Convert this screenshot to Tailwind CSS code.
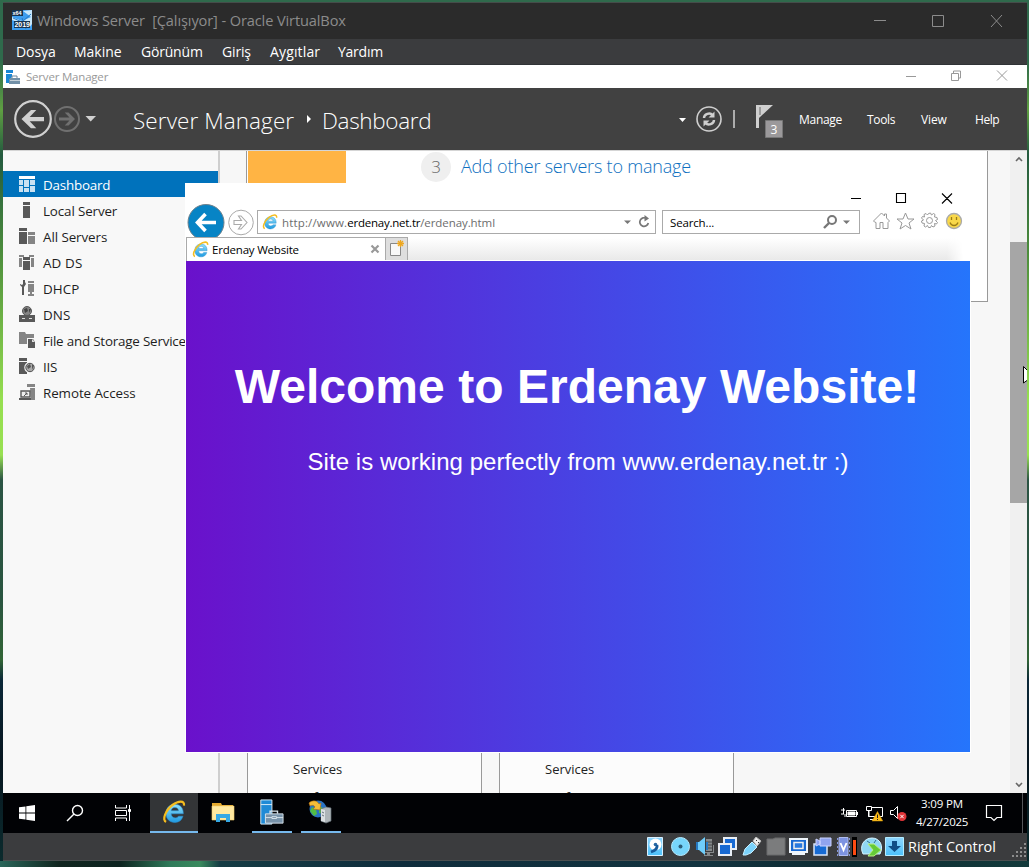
<!DOCTYPE html>
<html lang="tr">
<head>
<meta charset="utf-8">
<title>Windows Server - Oracle VirtualBox</title>
<script src="https://cdn.jsdelivr.net/npm/@tailwindcss/browser@4"></script>
</head>
<body class="h-[867px] w-[1029px] overflow-hidden whitespace-nowrap font-['Open_Sans',sans-serif]">
<!-- shared symbols -->
<svg class="absolute h-0 w-0">
  <linearGradient id="ieb" x1="0" y1="0" x2="0" y2="1"><stop offset="0" stop-color="#8fe0fb"/><stop offset="1" stop-color="#1f9ae0"/></linearGradient>
  <linearGradient id="sky" x1="0" y1="0" x2="0" y2="1"><stop offset="0" stop-color="#8fd6ff"/><stop offset="1" stop-color="#4cc0fa"/></linearGradient>
  <symbol id="ie" viewBox="0 0 24 24">
    <path d="M21.300 13.800H9.200C9.400 16.600 10.900 17.900 13.200 17.900c1.600 0 2.600-.6 3.300-1.700h4.400C19.900 20 17 22.400 12.900 22.400 7.500 22.400 4 18.800 4 13.400 4 8 7.500 4.300 12.900 4.300c5.400 0 8.600 3.800 8.400 9.500zM9.200 10.700h7.300c-.2-2.100-1.500-3.200-3.600-3.200-2.100 0-3.400 1.200-3.700 3.200z" fill="url(#ieb)" stroke="#2b8fd0" stroke-width=".6"/>
    <path d="M4.200 21.800C-.4 20.500 3.500 10.300 10.500 5 16.200.8 22.800-.2 22 5.600" fill="none" stroke="#f5bd1f" stroke-width="2.200"/>
  </symbol>
  <symbol id="toolbox" viewBox="0 0 28 28">
    <path d="M3 1h12v26H3z" fill="#1f8ad6" stroke="#dff0fb"/><path d="M3 6h12" stroke="#dff0fb"/>
    <path d="M13 16v-3h8v3" fill="none" stroke="#d9e4ec" stroke-width="1.500"/>
    <path d="M8 16h19v10H8z" fill="#7893aa" stroke="#d9e4ec"/><path d="M8 20h7m5 0h7M15 19h5v2h-5z" stroke="#d9e4ec" fill="none"/>
  </symbol>
</svg>

<div class="flex h-full flex-col bg-[linear-gradient(to_bottom,#2f6a4c_0px,#2f6a4c_60px,#5f9f42_110px,#245a3f_155px,#4b8c3c_250px,#96df50_400px,#98e052_455px,#2b5444_480px,#2a5540_600px,#326536_660px,#0b2838_680px,#071620_760px,#0b2c2e_867px)] pl-[3px] pr-[2px] pt-[2px]">
  <!-- VirtualBox title -->
  <header class="flex h-[37px] shrink-0 items-center border-t border-[#454d4a] bg-[#2b2b2b] pl-[9px] text-[#8c8c8c]">
    <svg class="-mt-[3px] h-5 w-5 shrink-0" viewBox="0 0 20 20"><path fill="#3c9df0" d="M0 0h20v20H0z"/><path fill="#c7e7fb" d="m11 1 8 6-9 4L0 7v3l8 3 6-1 3 6 3-4V0z"/><path stroke="#2679c5" d="m1 8 9 4 9-8M10 8l4 11" fill="none"/><path fill="#173450" d="M0 0h11v6H0zM2 11h16v7H2z"/><text x=".5" y="5.300" font-family="Liberation Sans" font-size="5.500" font-weight="700" fill="#fff">x64</text><text x="2.400" y="17" font-family="Liberation Sans" font-size="7" font-weight="700" fill="#fff">2019</text></svg>
    <h1 class="-mt-[2px] ml-[5px] whitespace-pre text-[14.600px] leading-5 tracking-[-0.120px]">Windows Server  [Çalışıyor] - Oracle VirtualBox</h1>
    <svg class="-mt-px ml-auto mr-[23px] h-5 w-[131px]" viewBox="0 0 131 20" fill="none" stroke="#8c8c8c"><path d="M1 9.500h12M59.500 4.500h11v11h-11zM118 4l11 12M129 4l-11 12"/></svg>
  </header>
  <nav class="flex h-[26px] shrink-0 items-center border-b border-[#303336] bg-[#3b3c3e] pl-[13px] text-[14px] text-white">
    <span class="w-[58px] tracking-[-0.050px]">Dosya</span><span class="w-[67px] tracking-[-0.020px]">Makine</span><span class="w-[81px] tracking-[-0.200px]">Görünüm</span><span class="w-[48px] tracking-[-0.150px]">Giriş</span><span class="w-[68px] tracking-[0.150px]">Aygıtlar</span><span class="tracking-[-0.250px]">Yardım</span>
  </nav>

  <!-- Guest display -->
  <main class="relative flex h-[768px] shrink-0 flex-col overflow-hidden bg-[#f7f7f7] text-[#1e1e1e]">
    <div class="flex h-[23px] shrink-0 items-center bg-white pl-[2px] text-[11.500px] text-[#999]">
      <svg class="h-4 w-4" viewBox="0 0 16 16"><path fill="#1c87d5" d="M1 1h7v3H1zM1 5h6v3L4 11v3H1z"/><path d="M7 9V7h5v2" fill="none" stroke="#6c879d"/><path fill="#7290a7" d="M5 9h10v6H4v-4z"/><path stroke="#c4d0d8" d="M5 11.500h10"/></svg>
      <span class="ml-[5px] tracking-[-0.200px]">Server Manager</span>
      <svg class="-mt-[2px] ml-auto mr-[16px] h-4 w-[108px]" viewBox="0 0 108 16" fill="none" stroke="#999"><path d="M3 8.500h10M48.500 5.500h7v7h-7zM50.500 5v-2h7v7h-2M94 2.500l10 10M104 2.500l-10 10"/></svg>
    </div>

    <div class="flex h-[63px] shrink-0 items-center border-b border-[#d5d5d5] bg-[#414141] pl-[10px] text-white">
      <svg class="h-10 w-[85px] shrink-0" viewBox="0 0 85 40" fill="none"><circle cx="20" cy="20" r="17.800" stroke="#d0d0d0" stroke-width="2.200"/><path d="M31 18v4.200H16.700l6.600 7H18L8.500 20.100 18 11h5.300l-6.600 7z" fill="#d0d0d0"/><circle cx="54" cy="20" r="12" stroke="#707070" stroke-width="2"/><path d="M46 18.600v3h10.500l-4.800 5h3.800l6.500-6.500-6.500-6.500h-3.800l4.800 5z" fill="#707070"/><path d="M72.500 17h10.500L77.700 22.500z" fill="#d0d0d0"/></svg>
      <span class="ml-[35px] w-[171px] pt-[3px] text-[22.500px] font-light tracking-[0.080px]">Server Manager</span>
      <svg class="h-[10px] w-2" viewBox="0 0 8 10"><path d="M3 1v8l4-4z" fill="#fff"/></svg>
      <span class="ml-[10px] w-[112px] pt-[3px] text-[22.500px] font-light tracking-[-0.320px]">Dashboard</span>
      <svg class="ml-auto mr-[16px] h-10 w-[107px] shrink-0" viewBox="0 0 107 40"><path d="M3 19h7l-3.500 4z" fill="#fff"/><circle cx="33" cy="20" r="12" fill="none" stroke="#cfcfcf" stroke-width="1.600"/><path d="M28 19c0-4 6-6 8.500-3M38 21c0 4-6 6-8.500 3" fill="none" stroke="#cfcfcf" stroke-width="2.400"/><path d="M38.500 12.500v6h-6zM27.500 27.500v-6h6z" fill="#cfcfcf"/><path stroke="#d0d0d0" stroke-width="1.500" d="M58 11v18"/><path fill="#cfcfcf" d="M80 6h17L83 19v10h-3z"/><path d="M84 8v8" stroke="#666"/><path fill="#9b999b" stroke="#777" d="M89.500 21.500h17v17h-17z"/><text x="94.500" y="35" font-family="Open Sans" font-size="12" fill="#fff">3</text></svg>
      <nav class="mr-[27px] flex gap-[26px] pt-[2px] text-[12px]"><span class="w-[43px] tracking-[-0.280px]">Manage</span><span class="-ml-px w-[28px] tracking-[-0.350px]">Tools</span><span class="w-[26px] tracking-[-0.100px]">View</span><span class="ml-[2px] w-[25px] tracking-[-0.450px]">Help</span></nav>
    </div>

    <div class="flex min-h-0 flex-1">
      <aside class="w-[217px] shrink-0 overflow-hidden border-r-2 border-[#cfcfcf] bg-[#f8f8f8] pt-5 text-[13.400px] tracking-[-0.200px]">
        <div class="flex h-[26px] items-center bg-[#0072bc] pl-4 text-white"><svg class="mr-2 h-4 w-4" viewBox="0 0 16 16"><path fill="#fff" d="M0 0h16v3H0z"/><path fill="#cae2f2" d="M0 4h4v5H0zM0 10h4v6H0zM5 4h5v7H5zM5 12h5v4H5zM11 4h5v5h-5zM11 10h5v6h-5z"/></svg><span class="pt-[2px]">Dashboard</span></div>
        <div class="flex h-[26px] items-center pl-4"><svg class="mr-2 h-4 w-4" viewBox="0 0 16 16" fill="#595959"><path d="M4 0h7v3H4zM4 4h7v12H4z"/></svg><span class="pt-[2px] tracking-[-0.130px]">Local Server</span></div>
        <div class="flex h-[26px] items-center pl-4"><svg class="mr-2 h-4 w-4" viewBox="0 0 16 16"><path fill="#595959" d="M0 0h8v3H0zM0 4h8v12H0z"/><path fill="#858585" d="M9 4h7v3H9zM9 8h7v8H9z"/></svg><span class="pt-[2px] tracking-[-0.080px]">All Servers</span></div>
        <div class="flex h-[26px] items-center pl-4"><svg class="mr-2 h-4 w-4" viewBox="0 0 16 16"><path fill="#858585" d="M0 1h5v2H0zM10 1h5v2h-5zM0 4h3v9H0zM12 4h3v9h-3z"/><path fill="#595959" d="M4 3h7v3H4zM4 7h7v9H4z"/></svg><span class="pt-[2px] tracking-[0.150px]">AD DS</span></div>
        <div class="flex h-[26px] items-center pl-4"><svg class="mr-2 h-4 w-4" viewBox="0 0 16 16"><path fill="#595959" d="M1 1v3l2 1 1-1V0h2v2l1 2-2 3v8H3V7L1 5z"/><path fill="#858585" d="M9 1h6v2H9zM9 4h6v8H9zM11 12h2v2h2v2H9v-2h2z"/></svg><span class="pt-[2px] tracking-[0.050px]">DHCP</span></div>
        <div class="flex h-[26px] items-center pl-4"><svg class="mr-2 h-4 w-4" viewBox="0 0 16 16"><circle cx="8" cy="5" r="4.500" fill="#858585" stroke="#595959"/><path fill="#444" d="m5 3 3-1 1 3-3 2zm5 0h2l-2 4z"/><path fill="#595959" d="M0 9h16v7H0z"/><path stroke="#ddd" d="M3 12.500h3m4 0h3"/></svg><span class="pt-[2px] tracking-[0.100px]">DNS</span></div>
        <div class="flex h-[26px] items-center pl-4"><svg class="mr-2 h-4 w-4 shrink-0" viewBox="0 0 16 16"><path fill="#858585" d="M0 0h6l1 2h8v4H8v6H0z"/><path fill="#595959" d="M9 7h5l2 3v6H9z"/><path fill="#ddd" d="M13 7v3h3z"/></svg><span class="pt-[2px]">File and Storage Services</span></div>
        <div class="flex h-[26px] items-center pl-4"><svg class="mr-2 h-4 w-4" viewBox="0 0 16 16"><path fill="#595959" d="M0 0h8v3H0zM0 4h8v12H0z"/><circle cx="11" cy="9.500" r="5" fill="#aaa" stroke="#f8f8f8" stroke-width="1.500"/><circle cx="11" cy="9.500" r="4.200" fill="#aaa" stroke="#555"/><path fill="#555" d="m8 8 3-2 1 3-3 2zm5-1h2l-2 5z"/></svg><span class="pt-[2px]">IIS</span></div>
        <div class="flex h-[26px] items-center pl-4"><svg class="mr-2 h-4 w-4" viewBox="0 0 16 16"><path fill="#858585" d="M8 0h8v3H8zM11 4h5v12h-4z"/><path fill="#eee" stroke="#595959" stroke-width="1.400" d="M2 7h9v6H2z"/><path fill="#595959" d="M0 14h12v2H0z"/><path d="m5 12 3-3M6 9h2v2" stroke="#595959" fill="none"/></svg><span class="pt-[2px] tracking-[-0.080px]">Remote Access</span></div>
      </aside>

      <section class="flex min-w-0 flex-1 flex-col justify-between pl-[26px]">
        <div class="flex h-[151px] w-[742px] border-x border-b border-[#999] bg-white pl-px">
          <div class="h-full w-[98px] bg-[#ffb444]"></div>
          <div class="ml-[75px] flex h-[31px] items-center"><span class="flex h-[30px] w-[30px] items-center justify-center rounded-full bg-[#efefef] text-[17px] font-light text-[#666]">3</span><span class="ml-[10px] text-[18px] font-light tracking-[-0.200px] text-[#0d6fc0]">Add other servers to manage</span></div>
        </div>
        <div class="ml-px flex h-[42px] gap-[17px] overflow-hidden text-[13px] leading-[24px] text-[#222]">
          <div class="w-[235px] border-x border-[#999] bg-[#fcfcfc] pl-[45px] pt-[6px]"><p>Services</p><p class="pt-[4px]">Performance</p></div>
          <div class="w-[235px] border-x border-[#999] bg-[#fcfcfc] pl-[45px] pt-[6px]"><p>Services</p><p class="pt-[4px]">Performance</p></div>
        </div>
      </section>

      <div class="flex w-[17px] shrink-0 flex-col items-center bg-[#f0f0f0]"><svg class="h-[17px] w-[17px]" viewBox="0 0 17 17"><path d="m6 10 3-3 3 3" fill="none" stroke="#666" stroke-width="1.600"/></svg><div class="mt-[74px] h-[261px] w-full bg-[#a6a6a6]"></div><svg class="mt-auto h-[17px] w-[17px]" viewBox="0 0 17 17"><path d="m6 7 3 3 3-3" fill="none" stroke="#666" stroke-width="1.600"/></svg></div>
    </div>

    <!-- Guest taskbar -->
    <div class="flex h-10 shrink-0 bg-[#010205] text-white">
      <div class="flex w-12 items-center justify-center"><svg class="h-4 w-4" viewBox="0 0 16 16" fill="#fff"><path d="m0 2.300 6.500-.9v6.100H0zM7.300 1.300 16 0v7.500H7.300zM0 8.400h6.500v6.200L0 13.700zM7.300 8.400H16V16l-8.700-1.300z"/></svg></div>
      <div class="flex w-12 items-center justify-center"><svg class="h-[18px] w-[18px]" viewBox="0 0 18 18" fill="none" stroke="#fff" stroke-width="1.400"><circle cx="11.500" cy="6.500" r="5"/><path d="m8 10-7 7"/></svg></div>
      <div class="flex w-[51px] items-center justify-center pr-[3px]"><svg class="h-[18px] w-[18px]" viewBox="0 0 18 18" fill="none" stroke="#fff"><path d="M1.500 1v3h11V1M1.500 6.500h11v5h-11zM1.500 17v-3h11v3M15.500 1v16"/><path fill="#fff" d="M14.500 5.500h2v2h-2z"/></svg></div>
      <div class="flex w-12 items-center justify-center border-b-2 border-[#76b9ed] bg-[#333537]"><svg class="h-6 w-6"><use href="#ie"/></svg></div>
      <div class="flex w-[50px] items-center justify-center"><svg class="h-6 w-6" viewBox="0 0 24 24"><path fill="#e3a82d" d="M1 2h9l1 2h11v3H1z"/><path fill="#ffe9a0" stroke="#f2ce6b" stroke-width=".6" d="M1 5h22v14H1z"/><path fill="#36a9e5" d="M5 13h14v8h-4v-4H9v4H5z"/></svg></div>
      <div class="ml-1 flex w-10 items-center justify-center border-b-2 border-[#76b9ed] pr-[2px]"><svg class="h-[26px] w-[26px]"><use href="#toolbox"/></svg></div>
      <div class="ml-[9px] flex w-10 items-center justify-center border-b-2 border-[#76b9ed] pr-[2px]"><svg class="h-6 w-6" viewBox="0 0 24 24"><circle cx="10" cy="9" r="8.500" fill="#2873c5"/><path fill="#52bd45" d="M4 7l4 2 1 5-3 2-4-5zM11 6l6 3-1 5-5-1z"/><path fill="#f7bd38" stroke="#b26b12" stroke-width=".6" d="M1 3c3-3 8-3 10 1l2-1-1 7-7-1 2-2C6 5 4 5 2 6z"/><path fill="#aeb5b9" stroke="#65717a" stroke-width=".7" d="m13 9 5-2 5 1v13l-5 2-5-2z"/><path fill="#dce0e3" d="m13 9 4 1v12l-4-1z"/><path stroke="#67737c" d="m14 12 2 1m-2 2 2 1"/></svg></div>
      <svg class="ml-auto h-10 w-[72px] shrink-0" viewBox="0 0 72 40" fill="none" stroke="#fff"><path d="M5.500 17.500h10v6h-10zM16.500 19v3M0 17h4M0 21h3M2.500 15v6M4 21v3"/><path fill="#fff" d="M7 19h7v3H7z"/><path d="M27.500 14.500h14v9h-14zM34.500 24v3M29 26.500h10"/><path fill="#010205" d="M25.500 13.500h5v4h-5z"/><path d="M28 18v6"/><path fill="#fdbd1c" stroke="#d79b0d" stroke-width=".5" d="m36.500 18.500 5.200 9.500H31z"/><path d="M36.500 21.500v3.500m0 1v1" stroke="#222"/><path d="M49.500 17.500h3l4-4v12l-4-4h-3z"/><circle cx="61" cy="23.500" r="4.500" fill="#df3438" stroke="none"/><path d="m59.300 21.800 3.400 3.400m0-3.400-3.400 3.400"/></svg>
      <div class="flex w-[58px] flex-col items-center justify-center text-[11.500px] leading-[18px] tracking-[-0.250px]"><span class="tracking-[-0.150px]">3:09 PM</span><span>4/27/2025</span></div>
      <svg class="ml-[14px] h-10 w-[18px]" viewBox="0 0 18 40"><path d="M1.500 12.500h15v12H12l-3 3-3-3H1.500z" fill="none" stroke="#fff" stroke-width="1.200"/></svg>
      <div class="ml-[19px] w-[5px] border-l border-[#55565a]"></div>
    </div>

    <!-- Internet Explorer window -->
    <div class="absolute left-[182px] top-[118px] flex h-[570px] w-[786px] flex-col bg-white text-[11.500px] text-black">
      <div class="flex h-[24px] shrink-0 justify-end pr-[16px] pt-2"><svg class="h-4 w-[106px]" viewBox="0 0 106 16" fill="none" stroke="#000"><path d="M2 7.500h10M47.500 2.500h9v9h-9zM93 2.500l10 10m0-10-10 10" stroke-width="1.100"/></svg></div>
      <div class="flex h-[31px] shrink-0 pl-[1px]">
        <svg class="-mt-[5px] h-[36px] w-[71px] shrink-0" viewBox="0 0 71 36"><circle cx="20" cy="20.500" r="18" fill="#0784c5" stroke="#72828c"/><path d="M11.500 20.500H30M19.500 12l-8 8.500 8 8.500" fill="none" stroke="#fff" stroke-width="3.600"/><circle cx="55" cy="20.500" r="12.300" fill="#fff" stroke="#aaa"/><path d="M48 18.500h7.500l-3-4.500h2.500l6 6.500-6 6.500h-2.500l3-4.500H48z" fill="#fff" stroke="#aaa" stroke-width="1.100"/></svg>
        <div class="mt-[3px] flex h-[24px] w-[399px] items-center border border-[#aaa] pl-1 text-[#6d6d6d]"><svg class="mr-1 h-4 w-4"><use href="#ie"/></svg><span class="pt-px tracking-[0.160px]">http://www.</span><span class="pt-px tracking-[-0.240px] text-black">erdenay.net.tr</span><span class="pt-px tracking-[-0.080px]">/erdenay.html</span><svg class="ml-auto mr-[2px] h-4 w-[30px]" viewBox="0 0 30 16"><path d="M1 6.500h7L4.500 10z" fill="#777"/><path d="M23.500 4.500A4.300 4.300 0 1 0 25.300 9" fill="none" stroke="#777" stroke-width="1.700"/><path d="m21.500 1 4.500 3.500-4.500 3z" fill="#777"/></svg></div>
        <div class="ml-[6px] mt-[3px] flex h-[24px] w-[198px] items-center border border-[#aaa] pl-[7px]"><span class="pt-px tracking-[-0.150px]">Search...</span><svg class="ml-auto mr-[7px] h-4 w-[30px]" viewBox="0 0 30 16"><circle cx="10" cy="6" r="4" fill="none" stroke="#777" stroke-width="2"/><path d="m7 9-5 5" stroke="#777" stroke-width="2.400"/><path d="M21 6.500h7L24.500 10z" fill="#777"/></svg></div>
        <svg class="ml-[12px] mt-[4px] h-5 w-[92px]" viewBox="0 0 92 20" fill="none" stroke="#999"><path d="m1.500 10 8-8 3 3V3h2v4l3 3-1.500 1.500v6h-5v-6H8v6H4v-6L2.500 11z"/><path d="m33.500 2 2.500 6h6l-5 4 2 6-5.500-3.500L28 18l2-6-5-4h6z"/><path d="m56.500 2.500 2-.5 1 2 2-1.500 1.500 1-.5 2.500 2.500.5.500 2-2 1 2 2-1 1.500-2-.5.500 2.500-2 1-1.500-1.500-1 2h-2l-1-2-2 1.500-1.500-1 .5-2.500-2.500-.5-.5-2 2-1-2-2 1-1.500 2 .5-.5-2.500 2-1 1.500 1.500z"/><circle cx="57.500" cy="9.500" r="3"/><circle cx="82" cy="10" r="7.500" fill="#f9d84a" stroke="#aaa" stroke-width="1.300"/><path d="M79.500 6v3m5-3v3M78 11.500c1.500 4 6.500 4 8 0" stroke="#9b7c16" stroke-width="1.300"/></svg>
      </div>
      <div class="relative flex h-[23px] shrink-0 pl-[1px]">
        <div class="absolute bottom-px right-[8px] top-0 w-[555px] bg-linear-to-b from-white to-[#e9e9e9] [mask-image:linear-gradient(to_left,transparent,black_16px)]"></div>
        <div class="relative -mt-px flex h-[24px] w-[199px] items-center border-l border-t border-[#aaa] bg-white pl-[5px] pb-px"><svg class="mr-[3px] h-[17px] w-[17px]"><use href="#ie"/></svg><span class="pt-px tracking-[-0.200px]">Erdenay Website</span><svg class="ml-auto mr-[5px] h-[10px] w-[10px]" viewBox="0 0 10 10"><path d="m1.500 1.500 7 7m0-7-7 7" stroke="#999" stroke-width="2.200"/></svg></div>
        <div class="relative -mt-px h-[23px] w-[23px] border border-b-0 border-[#aaa] bg-[#dedede] pl-1 pt-[2px]"><svg class="h-[17px] w-[15px]" viewBox="0 0 15 17"><path d="M.5 3.500h10v12H.5z" fill="#f8f8f8" stroke="#888"/><path d="M10.500 0v7M7 3.500h7M8 1l5 5m0-5L8 6" stroke="#eea71f" stroke-width="1.300"/></svg></div>
      </div>
      <article class="mx-px mb-px flex flex-1 flex-col items-center bg-linear-to-r/srgb from-[#6a11cb] to-[#2575fc] pt-[99px] font-['Liberation_Sans',sans-serif] text-white">
        <h2 class="mr-[2px] text-[48px] leading-[54px] font-bold tracking-[0.030px]">Welcome to Erdenay Website!</h2>
        <p class="mt-[34px] text-[24px] leading-[28px] tracking-[0.050px]">Site is working perfectly from www.erdenay.net.tr :)</p>
      </article>
    </div>
    <svg class="absolute right-0 top-[301px] h-[18px] w-1" viewBox="0 0 4 18"><path d="M.5.5 6 6v7l-5.500 4z" fill="#fff" stroke="#000"/></svg>
  </main>

  <!-- VirtualBox status bar -->
  <footer class="flex h-[28px] shrink-0 items-center justify-end border-b border-[#4b4f50] bg-[#3b3c3e] text-[14.400px] text-white">
    <svg class="-mr-px h-5 w-[260px] shrink-0" viewBox="0 0 260 20">
      <path fill="url(#sky)" stroke="#d9f0ff" d="M1.500.5h15v18h-15z"/><circle cx="9.500" cy="7.500" r="6" fill="#fff"/><circle cx="9.500" cy="7.500" r="1.800" fill="#2868a4"/><path d="M11 8c1 4-3 6-6 7" stroke="#175b9c" stroke-width="2.800" fill="none"/>
      <circle cx="34.500" cy="9.500" r="9" fill="#77d5fb" stroke="#b5eaff"/><circle cx="34.500" cy="9.500" r="2" fill="#2c5d78"/>
      <path fill="#85898b" d="M60 2h6v12h-6zM57 8h2v7h8V8h1v8h-4v2h3v1h-9v-1h3v-2h-4z"/><path stroke="#45494b" d="M60 5h6m-6 3h6m-6 3h6"/><path fill="#6fcdfb" d="M50 5h3l6-5v18l-6-5h-3z"/><path fill="#2778c0" d="M50 5h2v8h-2zM60 5h2v8h-2z"/>
      <path fill="#1769d2" stroke="#e8edf4" stroke-width="2" d="M78 1h12v11H78z"/><path fill="#1769d2" stroke="#e8edf4" stroke-width="2" d="M73 7h12v11H73z"/>
      <path d="m97 18 2-6 7-7 5 5-6 6-5 2z" fill="#7bd2fa" stroke="#c5eeff"/><path d="m107 4 3-4 5 4-4 5z" fill="#eee" stroke="#bbb"/><path d="m110 3 1 1m1 1 1 1" stroke="#333"/>
      <path fill="#7b7c7d" stroke="#6a6b6c" d="M121 2h6l2-1h10v17h-18z"/>
      <path fill="#eff5fb" d="M143 1h19v15h-3v2h-13v-2h-3z"/><path fill="#1769d2" d="M145 3h15v11h-15z"/><path fill="#2779df" stroke="#eee" stroke-width="1.500" d="M148 5.500h9v6h-9z"/>
      <path fill="#176bd4" stroke="#dbe6f7" stroke-width="1.500" d="M168 7h13v11h-13z"/><path fill="#91a4ef" stroke="#cbd3ff" d="M174 1h11v8h-11zM170 2l4 2v3l-4 2z"/>
      <path fill="#7d93e2" stroke="#b0bcf0" d="M193 .5h9v18h-9z"/><path stroke="#8495d8" stroke-dasharray="2 2" d="M191.500 1v18m12-18v18"/><path d="m194.500 6 3 7 3-7" fill="none" stroke="#fff" stroke-width="1.900"/>
      <path fill="#000" d="M206 0h5v20h-5z"/><path fill="#ff4b12" d="M207 3h3v15h-3z"/>
      <path d="M217 17c-4-8 1-16 9-16s12 8 8 16z" fill="#90d8f5" stroke="#d4f2ff"/><path d="m221 4 3 2m6-3-2 3" stroke="#347092"/><path d="M222 7h6l7 6-7 6h-6l5-6z" fill="#64ca38" stroke="#b8ee83"/>
      <path fill="url(#sky)" stroke="#b5ecff" d="M239.500.5h18v18h-18z"/><path fill="#104d86" d="M246 4h5v5h4l-6.500 6-6.500-6h4z"/>
    </svg>
    <span class="ml-[3px] w-[89px] pt-px tracking-[0px]">Right Control</span>
    <svg class="ml-[15px] mt-2 h-[15px] w-[15px]" viewBox="0 0 15 15" fill="#8d8d8d"><path d="M12 0h2v2h-2zM8 4h2v2H8zM12 4h2v2h-2zM4 8h2v2H4zM8 8h2v2H8zM12 8h2v2h-2zM0 12h2v2H0zM4 12h2v2H4zM8 12h2v2H8zM12 12h2v2h-2z"/></svg>
  </footer>
  <div class="-ml-[3px] -mr-[2px] flex-1 bg-[linear-gradient(to_right,#2a665a_0,#10251f_60px,#0d2420_120px,#2f7a5a_170px,#3a8a5e_200px,#153c44_220px,#0f2d3c_400px,#12333f_700px,#0c2a30_850px,#133b3c_1029px)]"></div>
</div>
</body>
</html>
